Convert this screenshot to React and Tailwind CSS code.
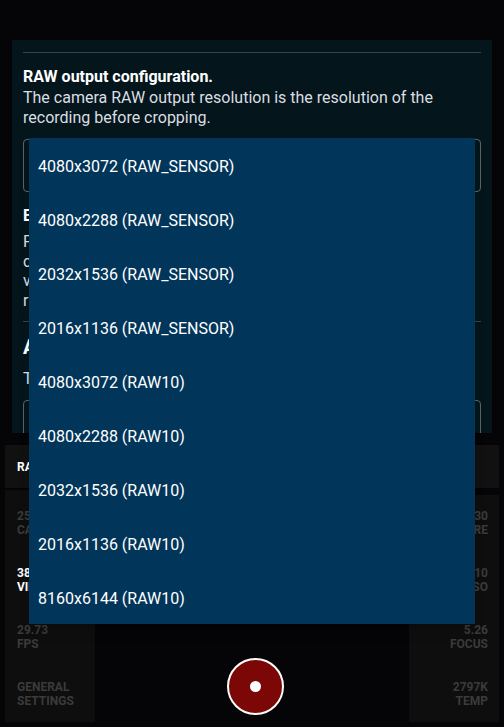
const options = [
  '4080x3072 (RAW_SENSOR)',
  '4080x2288 (RAW_SENSOR)',
  '2032x1536 (RAW_SENSOR)',
  '2016x1136 (RAW_SENSOR)',
  '4080x3072 (RAW10)',
  '4080x2288 (RAW10)',
  '2032x1536 (RAW10)',
  '2016x1136 (RAW10)',
  '8160x6144 (RAW10)',
]

const leftItems = [
  { value: '25.00', label: 'CAPTURE', active: false },
  { value: '38 MB', label: 'VIDEO', active: true },
  { value: '29.73', label: 'FPS', active: false },
  { value: 'GENERAL', label: 'SETTINGS', active: false },
]

const rightItems = [
  { value: '1/30', label: 'EXPOSURE' },
  { value: '110', label: 'ISO' },
  { value: '5.26', label: 'FOCUS' },
  { value: '2797K', label: 'TEMP' },
]

function Stat({ value, label, active, right }) {
  return (
    <div className={`text-[12px] font-bold leading-[14px] ${right ? 'text-right' : ''} ${active ? 'text-white' : 'text-[#3b3b3b]'}`}>
      <div>{value}</div>
      <div>{label}</div>
    </div>
  )
}

export default function App() {
  return (
    <div className="relative w-[504px] h-[727px] bg-[#050406] overflow-hidden" style={{ fontFamily: 'Roboto, "Noto Sans", sans-serif' }}>
      {/* camera controls */}
      <div className="flex h-full flex-col justify-end px-[5px] pb-[5px]">
        <div className="h-[43px] bg-[#111111] flex items-center pl-3 text-[12px] font-bold text-white">RAW 4080x3072</div>
        <div className="flex h-[232px] mt-[2px]">
          <div className="w-[90px] bg-[#0e0e0e] flex flex-col pl-3 pt-[19px] gap-[29px]">
            {leftItems.map(i => <Stat key={i.label} {...i} />)}
          </div>
          <div className="flex-1 flex items-end justify-center pb-[7px] pl-[6px]">
            <div className="w-[57px] h-[57px] rounded-full border-2 border-white bg-[#7c0707] flex items-center justify-center">
              <div className="w-[11px] h-[11px] rounded-full bg-white" />
            </div>
          </div>
          <div className="w-[90px] mt-[5px] bg-[#0e0e0e] flex flex-col pr-[11px] pt-[14px] gap-[29px]">
            {rightItems.map(i => <Stat key={i.label} {...i} right />)}
          </div>
        </div>
      </div>

      {/* settings dialog */}
      <div className="absolute left-[12px] top-[40px] w-[480px] h-[393px] bg-[#04161c] overflow-hidden px-[11px] pt-[12px]">
        <div className="border-t border-[#3a4046]" />
        <div className="mt-[14px] text-[16px] leading-[20px] font-bold text-white">RAW output configuration.</div>
        <div className="mt-[1px] text-[16px] leading-[20px] text-[#dadee1]">
          The camera RAW output resolution is the resolution of the recording before cropping.
        </div>
        <div className="mt-[11px] h-[53px] rounded border border-[#5b6369]" />
        <div className="mt-[14px] text-[16px] leading-[20px] font-bold text-white">Bitrate configuration.</div>
        <div className="mt-[6px] text-[16px] leading-[19.5px] text-[#dadee1] w-[10px] break-all">
          <div>F</div><div>c</div><div>v</div><div>r</div>
        </div>
        <div className="mt-[11px] border-t border-[#3a4046]" />
        <div className="mt-[13px] text-[20px] leading-[24px] font-bold text-white">Audio</div>
        <div className="mt-[10px] text-[16px] leading-[20px] text-[#dadee1]">The audio source.</div>
        <div className="mt-[11px] h-[53px] rounded border border-[#5b6369]" />
      </div>

      {/* dropdown menu */}
      <div className="absolute left-[29px] top-[138px] w-[446px] bg-[#02355a] shadow-lg">
        {options.map((o, i) => (
          <div key={i} className="h-[54px] flex items-center pl-[9px] pt-[3px] text-[16px] text-white">{o}</div>
        ))}
      </div>
    </div>
  )
}
